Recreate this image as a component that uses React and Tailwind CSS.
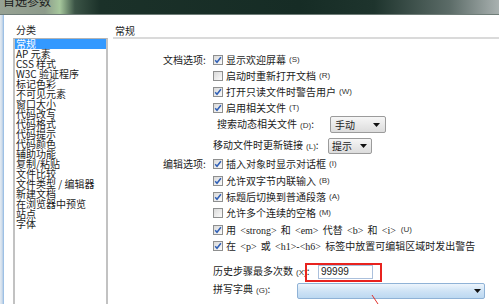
import React from "react";

const categories = [
  "常规",
  "AP 元素",
  "CSS 样式",
  "W3C 验证程序",
  "标记色彩",
  "不可见元素",
  "窗口大小",
  "代码改写",
  "代码格式",
  "代码提示",
  "代码颜色",
  "辅助功能",
  "复制/粘贴",
  "文件比较",
  "文件类型 / 编辑器",
  "新建文档",
  "在浏览器中预览",
  "站点",
  "字体",
];

function Check({ checked }) {
  return (
    <span className="w-[10px] h-[10px] shrink-0 border border-[#8e8f8f] bg-[linear-gradient(135deg,#d9d9d9,#fbfbfb)] flex items-center justify-center">
      {checked && (
        <svg width="8" height="8" viewBox="0 0 8 8">
          <path d="M1.2 4.3 L3 6.3 L6.9 1.3" stroke="#2f5fb6" strokeWidth="1.5" fill="none" />
        </svg>
      )}
    </span>
  );
}

function Key({ k }) {
  return <span className="ml-[3px] text-[8px] text-[#333] font-['Liberation_Sans',sans-serif]">({k})</span>;
}

function Tag({ children }) {
  return <span className="mx-[2px] font-['Liberation_Serif',serif]">{children}</span>;
}

function Tri() {
  return (
    <svg width="7" height="4" viewBox="0 0 7 4">
      <path d="M0 0 L7 0 L3.5 4 Z" fill="#111" />
    </svg>
  );
}

function Row({ label, checked, text, k, className = "" }) {
  return (
    <div className={`flex items-center h-[16px] ${className}`}>
      <div className="w-[50px] shrink-0">{label}</div>
      <Check checked={checked} />
      <span className="ml-[3px] whitespace-nowrap">{text}</span>
      {k && <Key k={k} />}
    </div>
  );
}

export default function App() {
  return (
    <div className="relative w-[499px] h-[304px] overflow-hidden bg-white text-[10px] leading-[10px] text-[#1c1c1c] font-['Noto_Sans_CJK_SC',sans-serif]">
      {/* title bar */}
      <div className="h-[14px] bg-[linear-gradient(90deg,#97a294_0%,#8d9b8b_9%,#a6c79c_12%,#3b5446_15%,#1b3129_20%,#162c25_60%,#1e342d_75%,#5b6b67_90%,#a9b1b0_100%)] pl-[3px] overflow-hidden">
        <div className="-mt-[5px] text-[12px] leading-[12px] text-[#1a1a1a]">首选参数</div>
      </div>
      <div className="h-[1px] bg-[#6f7d78]" />

      <div className="flex h-[289px]">
        {/* window frame */}
        <div className="w-[4px] shrink-0 bg-[linear-gradient(90deg,#e4ebf2,#cfdcea_50%,#8db7e3)]" />

        {/* categories */}
        <div className="w-[109px] shrink-0">
          <div className="ml-[12px] mt-[10px]">分类</div>
          <div className="ml-[9px] mt-[3px] w-[95px] h-[280px] border-2 border-b-0 border-[#c2c2c2] border-t-[#b4b4b4] border-t">
            {categories.map((c, i) => (
              <div
                key={c}
                className={`h-[10px] pl-[1px] whitespace-nowrap ${i === 0 ? "bg-[#3399ff] text-white" : ""}`}
              >
                {c}
              </div>
            ))}
          </div>
        </div>

        {/* general settings */}
        <div className="flex-1">
          <div className="mt-[11px] ml-[2px]">常规</div>
          <div className="mt-[1px] h-[2px] bg-[#dadada]" />

          <div className="pl-[50px] mt-[13px]">
            <Row label="文档选项:" checked text="显示欢迎屏幕" k="S" />
            <Row checked={false} text="启动时重新打开文档" k="R" />
            <Row checked text="打开只读文件时警告用户" k="W" />
            <Row checked text="启用相关文件" k="T" />

            <div className="flex items-center h-[17px]">
              <div className="w-[54px] shrink-0" />
              <span className="w-[113px] shrink-0 whitespace-nowrap">
                搜索动态相关文件<Key k="D" />:
              </span>
              <div className="w-[56px] h-[17px] border border-[#9b9b9b] rounded-[2px] bg-[linear-gradient(#f6f6f6,#dcdcdc)] flex items-center justify-between pl-[4px] pr-[5px]">
                <span>手动</span>
                <Tri />
              </div>
            </div>

            <div className="flex items-center h-[16px] mt-[5px]">
              <div className="w-[50px] shrink-0" />
              <span className="w-[115px] shrink-0 whitespace-nowrap">
                移动文件时更新链接<Key k="L" />:
              </span>
              <div className="w-[44px] h-[16px] border border-[#9b9b9b] rounded-[2px] bg-[linear-gradient(#f6f6f6,#dcdcdc)] flex items-center justify-between pl-[3px] pr-[4px]">
                <span>提示</span>
                <Tri />
              </div>
            </div>

            <Row label="编辑选项:" checked text="插入对象时显示对话框" k="I" className="mt-[2px]" />
            <Row checked text="允许双字节内联输入" k="B" className="mt-[1px]" />
            <Row checked text="标题后切换到普通段落" k="A" />
            <Row checked={false} text="允许多个连续的空格" k="M" />
            <Row
              checked
              text={
                <>
                  用 <Tag>&lt;strong&gt;</Tag> 和 <Tag>&lt;em&gt;</Tag> 代替 <Tag>&lt;b&gt;</Tag> 和 <Tag>&lt;i&gt;</Tag>
                </>
              }
              k="U"
              className="mt-[1px]"
            />
            <Row
              checked
              text={
                <>
                  在 <Tag>&lt;p&gt;</Tag> 或 <Tag>&lt;h1&gt;-&lt;h6&gt;</Tag> 标签中放置可编辑区域时发出警告
                </>
              }
            />

            <div className="flex items-center h-[16px] mt-[10px]">
              <div className="w-[50px] shrink-0" />
              <span className="w-[105px] shrink-0 whitespace-nowrap">
                历史步骤最多次数<Key k="X" />:
              </span>
              <div className="w-[55px] h-[14px] border border-[#abc0dc] bg-white flex items-center pl-[2px] font-['Liberation_Sans',sans-serif]">
                99999
              </div>
            </div>

            <div className="flex items-start h-[16px] mt-[3px]">
              <div className="w-[50px] shrink-0" />
              <span className="w-[84px] shrink-0 whitespace-nowrap pt-[1px]">
                拼写字典<Key k="G" />:
              </span>
              <div className="w-[188px] h-[16px] border border-[#8fb2d6] rounded-[2px] bg-[linear-gradient(#edf5fc,#cfe3f5_50%,#bcd8f1)] flex items-center justify-end pr-[3px]">
                <Tri />
              </div>
            </div>
          </div>
        </div>
      </div>

      {/* annotations */}
      <div className="absolute left-[305px] top-[263px] w-[77px] h-[19px] border-2 border-[#e8231f]" />
      <svg className="absolute left-[370px] top-[294px]" width="10" height="10" viewBox="0 0 10 10">
        <line x1="2" y1="1" x2="8" y2="10" stroke="#e0302c" strokeWidth="1" />
      </svg>
    </div>
  );
}
